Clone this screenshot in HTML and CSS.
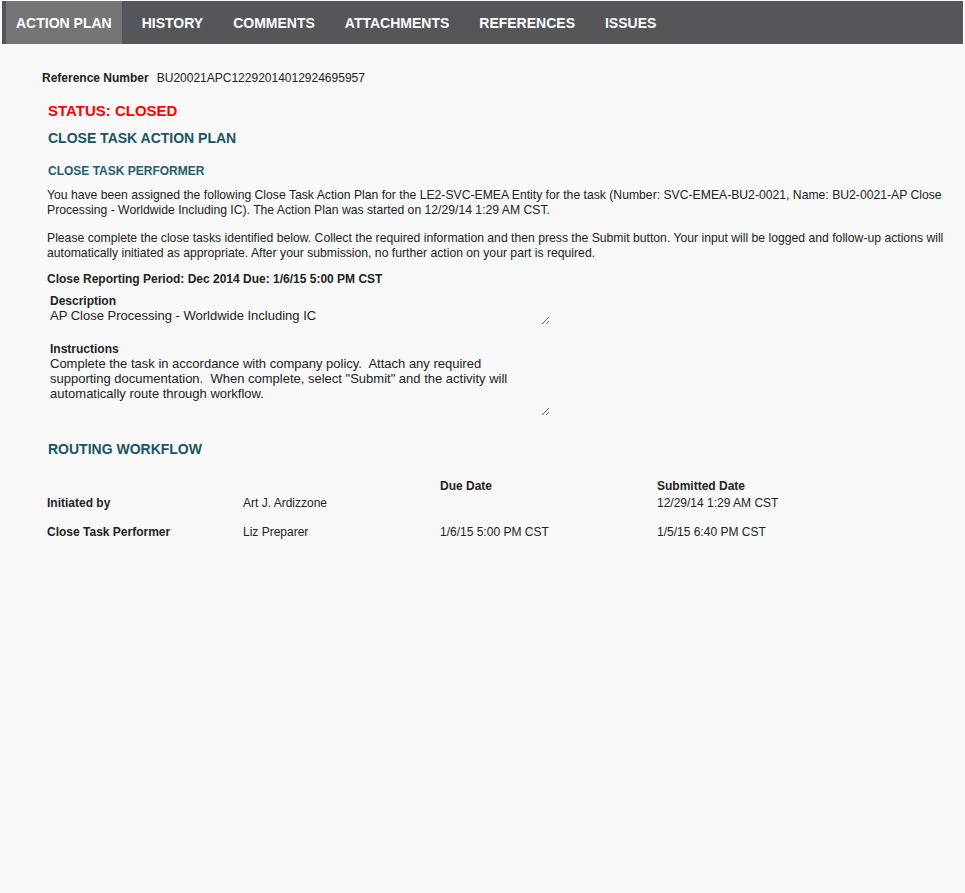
FILE: index.html
```html
<!DOCTYPE html>
<html lang="en">
<head>
<meta charset="utf-8">
<title>Action Plan</title>
<link rel="stylesheet" href="styles.css">
</head>
<body>
<nav class="tabs">
  <a class="tab active">ACTION PLAN</a>
  <a class="tab">HISTORY</a>
  <a class="tab">COMMENTS</a>
  <a class="tab">ATTACHMENTS</a>
  <a class="tab">REFERENCES</a>
  <a class="tab">ISSUES</a>
</nav>
<main class="content">
  <div class="ref"><span class="ref-label">Reference Number</span><span class="ref-value">BU20021APC12292014012924695957</span></div>
  <div class="panel">
    <div class="status">STATUS: CLOSED</div>
    <h2 class="section-title">CLOSE TASK ACTION PLAN</h2>
    <h3 class="sub-title">CLOSE TASK PERFORMER</h3>
    <p class="text p1">You have been assigned the following Close Task Action Plan for the LE2-SVC-EMEA Entity for the task (Number: SVC-EMEA-BU2-0021, Name: BU2-0021-AP Close Processing - Worldwide Including IC). The Action Plan was started on 12/29/14 1:29 AM CST.</p>
    <p class="text p2">Please complete the close tasks identified below. Collect the required information and then press the Submit button. Your input will be logged and follow-up actions will be automatically initiated as appropriate. After your submission, no further action on your part is required.</p>
    <div class="period">Close Reporting Period: Dec 2014 Due: 1/6/15 5:00 PM CST</div>
    <div class="field">
      <label class="field-label">Description</label>
      <textarea class="field-box short" readonly>AP Close Processing - Worldwide Including IC</textarea>
    </div>
    <div class="field second">
      <label class="field-label">Instructions</label>
      <textarea class="field-box tall" readonly>Complete the task in accordance with company policy.  Attach any required supporting documentation.  When complete, select "Submit" and the activity will automatically route through workflow.</textarea>
    </div>
    <h2 class="section-title routing">ROUTING WORKFLOW</h2>
    <div class="workflow">
      <div class="wf-row head">
        <span></span><span></span><span>Due Date</span><span>Submitted Date</span>
      </div>
      <div class="wf-row first">
        <span class="wf-role">Initiated by</span><span>Art J. Ardizzone</span><span></span><span>12/29/14 1:29 AM CST</span>
      </div>
      <div class="wf-row second">
        <span class="wf-role">Close Task Performer</span><span>Liz Preparer</span><span>1/6/15 5:00 PM CST</span><span>1/5/15 6:40 PM CST</span>
      </div>
    </div>
  </div>
</main>
</body>
</html>
```

FILE: styles.css
```css
html {
  background: #f9f9f9;
}
body {
  margin: 1px 2px;
  font-family: "Liberation Sans", Arial, sans-serif;
  font-size: 12px;
  color: #222;
}
.tabs {
  display: flex;
  gap: 10px;
  height: 43px;
  padding-left: 4px;
  background: #55565a;
}
.tab {
  display: block;
  padding: 1px 10px 0;
  line-height: 42px;
  font-size: 14px;
  font-weight: bold;
  color: #fff;
}
.tab.active {
  background: #757575;
}
.content {
  padding-left: 40px;
}
.ref {
  margin-top: 27px;
  line-height: 14px;
}
.ref-label {
  font-weight: bold;
  margin-right: 8px;
}
.panel {
  margin-left: 5px;
  width: 896px;
  overflow: hidden;
}
.status {
  margin-top: 17px;
  font-size: 15px;
  line-height: 18px;
  font-weight: bold;
  color: #f00;
  padding-left: 1px;
}
.section-title {
  margin: 10px 0 0;
  padding-left: 1px;
  font-size: 14px;
  line-height: 16px;
  font-weight: bold;
  color: #1a5464;
}
.sub-title {
  margin: 18px 0 0;
  padding-left: 1px;
  font-size: 12px;
  line-height: 15px;
  font-weight: bold;
  color: #22606e;
}
.text {
  width: 915px;
  margin: 0;
  font-size: 12.2px;
  line-height: 15px;
}
.p1 {
  margin-top: 9px;
}
.p2 {
  margin-top: 13px;
}
.period {
  margin-top: 11px;
  line-height: 15px;
  font-weight: bold;
}
.field {
  margin-top: 7px;
  padding-left: 3px;
}
.field.second {
  margin-top: 17px;
}
.field-label {
  display: block;
  line-height: 15px;
  font-weight: bold;
}
.field-box {
  display: block;
  box-sizing: border-box;
  width: 500px;
  margin: -3px 0 0;
  padding: 2px 15px 2px 0;
  border: none;
  background: transparent;
  font-family: "Liberation Sans", Arial, sans-serif;
  font-size: 13px;
  line-height: 15px;
  color: #222;
  overflow: hidden;
}
.field-box.short {
  height: 19px;
}
.field-box.tall {
  height: 62px;
}
.routing {
  margin-top: 25px;
}
.workflow {
  margin-top: 22px;
}
.wf-row {
  display: grid;
  grid-template-columns: 196px 197px 217px 1fr;
  line-height: 15px;
}
.wf-row.head {
  font-weight: bold;
}
.wf-row.first {
  margin-top: 2px;
}
.wf-row.second {
  margin-top: 14px;
}
.wf-role {
  font-weight: bold;
}
```
